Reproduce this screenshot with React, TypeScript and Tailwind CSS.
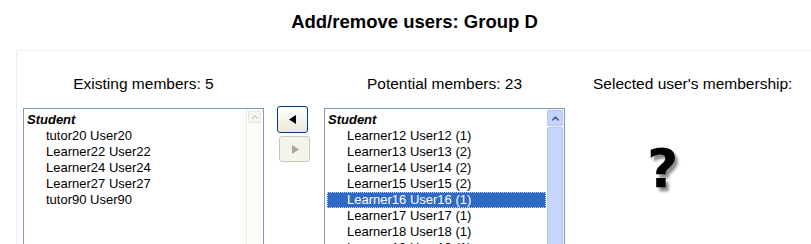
import { ChevronUp } from 'lucide-react'

const existing = ['tutor20 User20', 'Learner22 User22', 'Learner24 User24', 'Learner27 User27', 'tutor90 User90']

const potential = [
  'Learner12 User12 (1)',
  'Learner13 User13 (2)',
  'Learner14 User14 (2)',
  'Learner15 User15 (2)',
  'Learner16 User16 (1)',
  'Learner17 User17 (1)',
  'Learner18 User18 (1)',
  'Learner19 User19 (1)',
]

function ListBox({ items, selected, active }: { items: string[]; selected?: number; active?: boolean }) {
  return (
    <div className="flex w-[241px] h-[150px] border border-[#7f9db9] bg-white">
      <div className="flex-1 pt-[3px] pl-[2px] pr-[1px] overflow-hidden">
        <div className="h-[16px] leading-[16px] pl-[1px] font-bold italic text-[13px] text-black">Student</div>
        {items.map((item, i) => (
          <div
            key={item}
            className={
              i === selected
                ? 'h-[16px] leading-[14px] pl-[19px] text-[13px] text-white bg-[#316ac5] border border-dotted border-[#c6d6f2]'
                : 'h-[16px] leading-[16px] pl-[20px] text-[13px] text-black'
            }
          >
            {item}
          </div>
        ))}
      </div>
      {active ? (
        <div className="w-[17px] pt-[1px] pr-[1px] flex flex-col gap-[1px] bg-[#eef2fd]">
          <div className="h-[16px] rounded-[2px] border border-[#b7c8f0] bg-[#c3d3fd] flex items-center justify-center">
            <ChevronUp size={11} strokeWidth={3.2} className="text-[#4d6185]" />
          </div>
          <div className="flex-1 rounded-[2px] border border-[#b7c8f0] bg-[#c5d5fc] flex flex-col items-center justify-end pb-[2px] gap-[2px]">
            <div className="w-[7px] h-[1px] bg-[#eef3ff]" />
            <div className="w-[7px] h-[1px] bg-[#eef3ff]" />
            <div className="w-[7px] h-[1px] bg-[#eef3ff]" />
            <div className="w-[7px] h-[1px] bg-[#eef3ff]" />
          </div>
        </div>
      ) : (
        <div className="w-[17px] pt-[2px] pr-[2px] pl-[1px] border-l border-[#eeede5] bg-[#fbfbf8]">
          <div className="h-[12px] rounded-[2px] border border-[#e8e6dc] bg-[#f6f5ef] flex items-center justify-center">
            <ChevronUp size={10} strokeWidth={3} className="text-[#cfcdc2]" />
          </div>
        </div>
      )}
    </div>
  )
}

export default function App() {
  return (
    <div className="w-[811px] h-[244px] overflow-hidden bg-white text-black font-['Liberation_Sans',Arial,sans-serif]">
      <h2 className="h-[50px] pt-[11px] pl-[18px] text-center text-[18.5px] font-bold leading-[22px]">Add/remove users: Group D</h2>
      <div className="ml-[16px] w-[900px] h-[200px] border-t border-l border-[#eeeeee] pt-[24px] pl-[6px]">
        <div className="flex">
          <div className="flex flex-col">
            <div className="h-[17px] mb-[16px] text-center text-[15.5px] leading-[17px]">Existing members: 5</div>
            <ListBox items={existing} />
          </div>
          <div className="pt-[31px] pl-[13px] pr-[14px] flex flex-col gap-[3px]">
            <button className="w-[31px] h-[27px] rounded-[3px] border border-[#003c74] bg-gradient-to-b from-white to-[#ece9d8] flex items-center justify-center">
              <svg width="8" height="9" viewBox="0 0 8 9">
                <path d="M7 0 L7 9 L0 4.5 Z" fill="#000" />
              </svg>
            </button>
            <button disabled className="ml-[2px] w-[31px] h-[26px] rounded-[3px] border border-[#c9c7ba] bg-[#f5f4ea] flex items-center justify-center">
              <svg width="8" height="9" viewBox="0 0 8 9">
                <path d="M1 0 L1 9 L8 4.5 Z" fill="#aca899" />
              </svg>
            </button>
          </div>
          <div className="flex flex-col">
            <div className="h-[17px] mb-[16px] text-center text-[15.5px] leading-[17px]">Potential members: 23</div>
            <ListBox items={potential} selected={4} active />
          </div>
          <div className="pl-[28px] flex flex-col">
            <div className="h-[17px] text-[15.5px] leading-[17px]">Selected user's membership:</div>
            <div className="pl-[54px] pt-[56px] text-[54px] font-bold leading-[42px] font-['DejaVu_Sans',sans-serif] [text-shadow:3px_4px_3px_#8a8a8a]">?</div>
          </div>
        </div>
      </div>
    </div>
  )
}
